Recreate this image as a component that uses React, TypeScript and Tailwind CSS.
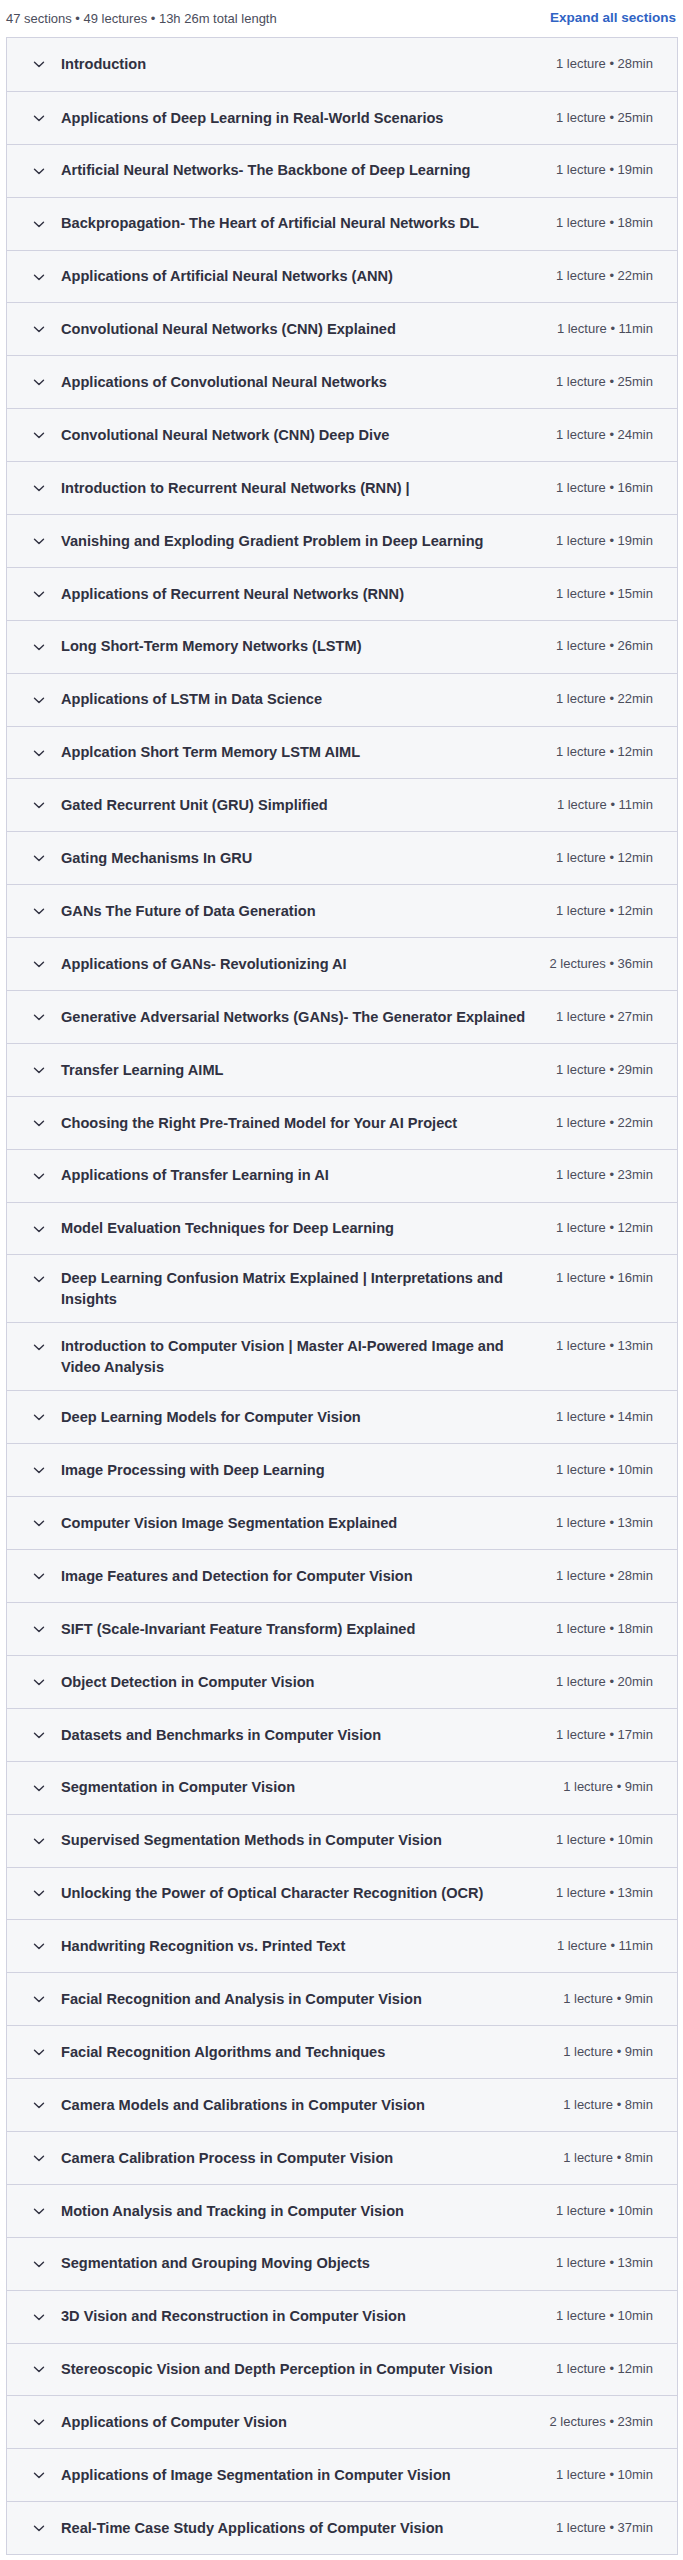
const sections = [
  { title: "Introduction", lectures: 1, length: "28min" },
  { title: "Applications of Deep Learning in Real-World Scenarios", lectures: 1, length: "25min" },
  { title: "Artificial Neural Networks- The Backbone of Deep Learning", lectures: 1, length: "19min" },
  { title: "Backpropagation- The Heart of Artificial Neural Networks DL", lectures: 1, length: "18min" },
  { title: "Applications of Artificial Neural Networks (ANN)", lectures: 1, length: "22min" },
  { title: "Convolutional Neural Networks (CNN) Explained", lectures: 1, length: "11min" },
  { title: "Applications of Convolutional Neural Networks", lectures: 1, length: "25min" },
  { title: "Convolutional Neural Network (CNN) Deep Dive", lectures: 1, length: "24min" },
  { title: "Introduction to Recurrent Neural Networks (RNN) |", lectures: 1, length: "16min" },
  { title: "Vanishing and Exploding Gradient Problem in Deep Learning", lectures: 1, length: "19min" },
  { title: "Applications of Recurrent Neural Networks (RNN)", lectures: 1, length: "15min" },
  { title: "Long Short-Term Memory Networks (LSTM)", lectures: 1, length: "26min" },
  { title: "Applications of LSTM in Data Science", lectures: 1, length: "22min" },
  { title: "Applcation Short Term Memory LSTM AIML", lectures: 1, length: "12min" },
  { title: "Gated Recurrent Unit (GRU) Simplified", lectures: 1, length: "11min" },
  { title: "Gating Mechanisms In GRU", lectures: 1, length: "12min" },
  { title: "GANs The Future of Data Generation", lectures: 1, length: "12min" },
  { title: "Applications of GANs- Revolutionizing AI", lectures: 2, length: "36min" },
  { title: "Generative Adversarial Networks (GANs)- The Generator Explained", lectures: 1, length: "27min" },
  { title: "Transfer Learning AIML", lectures: 1, length: "29min" },
  { title: "Choosing the Right Pre-Trained Model for Your AI Project", lectures: 1, length: "22min" },
  { title: "Applications of Transfer Learning in AI", lectures: 1, length: "23min" },
  { title: "Model Evaluation Techniques for Deep Learning", lectures: 1, length: "12min" },
  { title: "Deep Learning Confusion Matrix Explained | Interpretations and Insights", lectures: 1, length: "16min" },
  { title: "Introduction to Computer Vision | Master AI-Powered Image and Video Analysis", lectures: 1, length: "13min" },
  { title: "Deep Learning Models for Computer Vision", lectures: 1, length: "14min" },
  { title: "Image Processing with Deep Learning", lectures: 1, length: "10min" },
  { title: "Computer Vision Image Segmentation Explained", lectures: 1, length: "13min" },
  { title: "Image Features and Detection for Computer Vision", lectures: 1, length: "28min" },
  { title: "SIFT (Scale-Invariant Feature Transform) Explained", lectures: 1, length: "18min" },
  { title: "Object Detection in Computer Vision", lectures: 1, length: "20min" },
  { title: "Datasets and Benchmarks in Computer Vision", lectures: 1, length: "17min" },
  { title: "Segmentation in Computer Vision", lectures: 1, length: "9min" },
  { title: "Supervised Segmentation Methods in Computer Vision", lectures: 1, length: "10min" },
  { title: "Unlocking the Power of Optical Character Recognition (OCR)", lectures: 1, length: "13min" },
  { title: "Handwriting Recognition vs. Printed Text", lectures: 1, length: "11min" },
  { title: "Facial Recognition and Analysis in Computer Vision", lectures: 1, length: "9min" },
  { title: "Facial Recognition Algorithms and Techniques", lectures: 1, length: "9min" },
  { title: "Camera Models and Calibrations in Computer Vision", lectures: 1, length: "8min" },
  { title: "Camera Calibration Process in Computer Vision", lectures: 1, length: "8min" },
  { title: "Motion Analysis and Tracking in Computer Vision", lectures: 1, length: "10min" },
  { title: "Segmentation and Grouping Moving Objects", lectures: 1, length: "13min" },
  { title: "3D Vision and Reconstruction in Computer Vision", lectures: 1, length: "10min" },
  { title: "Stereoscopic Vision and Depth Perception in Computer Vision", lectures: 1, length: "12min" },
  { title: "Applications of Computer Vision", lectures: 2, length: "23min" },
  { title: "Applications of Image Segmentation in Computer Vision", lectures: 1, length: "10min" },
  { title: "Real-Time Case Study Applications of Computer Vision", lectures: 1, length: "37min" },
]

const ChevronDown = () => (
  <svg width="16" height="16" viewBox="0 0 16 16" fill="none" aria-hidden="true">
    <path d="M3.5 6.2l4.5 4.3 4.5-4.3" stroke="#303141" strokeWidth="1.4" strokeLinecap="round" strokeLinejoin="round" />
  </svg>
)

export default function App() {
  return (
    <div className="min-h-[2560px] bg-white font-['Liberation_Sans',Arial,sans-serif] text-[#303141]">
      {/* curriculum summary */}
      <div className="flex h-[37px] items-center justify-between pl-[6px] pr-[7px]">
        <span className="text-[13px] text-[#4b4d5c]">47 sections • 49 lectures • 13h 26m total length</span>
        <button type="button" className="text-[13.5px] font-bold text-[#2f63c4]">
          Expand all sections
        </button>
      </div>

      <div className="ml-[6px] mr-[5px] border border-[#d1d2e0] bg-[#f6f7f9]">
        {sections.map((section, i) => (
          <div
            key={section.title}
            className={`flex min-h-[52.9px] items-center py-[13px] pl-6 pr-6 ${i > 0 ? "border-t border-[#d1d2e0]" : ""}`}
          >
            <div className="flex w-full items-start">
              <span className="flex h-[20.5px] w-4 shrink-0 items-center">
                <ChevronDown />
              </span>
              <h3 className="ml-[14px] flex-1 text-[14.6px] font-bold leading-[20.5px] text-[#303141]">
                {section.title}
              </h3>
              <span className="ml-4 shrink-0 text-[13px] leading-[20.5px] text-[#4b4d5c]">
                {section.lectures} {section.lectures > 1 ? "lectures" : "lecture"} • {section.length}
              </span>
            </div>
          </div>
        ))}
      </div>
    </div>
  )
}
